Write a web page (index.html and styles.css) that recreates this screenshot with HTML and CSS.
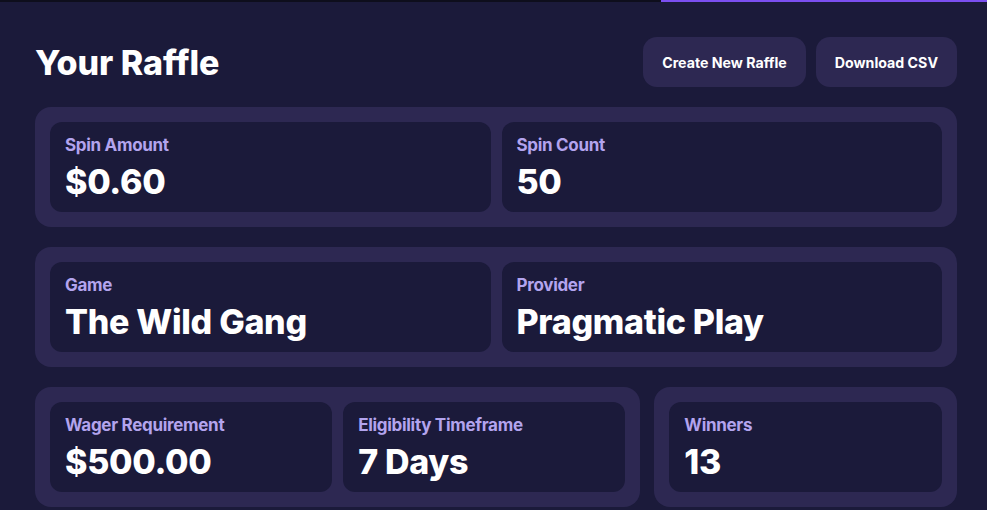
FILE: index.html
```html
<!DOCTYPE html>
<html lang="en">

<head>
    <meta charset="UTF-8">
    <meta name="viewport" content="width=device-width, initial-scale=1.0">
    <title>Your Raffle</title>
    <link rel="stylesheet" href="styles.css">
</head>

<body>
    <div class="topline">
        <div class="topline-dark"></div>
        <div class="topline-bar"></div>
    </div>
    <div class="page">
        <div class="header">
            <h1>Your Raffle</h1>
            <div class="actions">
                <a href="javascript:;" class="btn">Create New Raffle</a>
                <a href="javascript:;" class="btn">Download CSV</a>
            </div>
        </div>

        <div class="group">
            <div class="stat">
                <div class="label">Spin Amount</div>
                <div class="value">$0.60</div>
            </div>
            <div class="stat">
                <div class="label">Spin Count</div>
                <div class="value">50</div>
            </div>
        </div>

        <div class="group">
            <div class="stat">
                <div class="label">Game</div>
                <div class="value">The Wild Gang</div>
            </div>
            <div class="stat">
                <div class="label">Provider</div>
                <div class="value">Pragmatic Play</div>
            </div>
        </div>

        <div class="split">
            <div class="group">
                <div class="stat">
                    <div class="label">Wager Requirement</div>
                    <div class="value">$500.00</div>
                </div>
                <div class="stat">
                    <div class="label">Eligibility Timeframe</div>
                    <div class="value">7 Days</div>
                </div>
            </div>
            <div class="group single">
                <div class="stat">
                    <div class="label">Winners</div>
                    <div class="value">13</div>
                </div>
            </div>
        </div>
    </div>
</body>

</html>
```

FILE: styles.css
```css
body {
    margin: 0;
    background-color: #1b1a3a;
    font-family: "Inter", "Noto Sans", sans-serif;
    color: #fff;
}

.topline {
    display: flex;
    height: 2px;
}

.topline-dark {
    width: 661px;
    background-color: #0e0e1c;
}

.topline-bar {
    flex: 1;
    background-color: #7b4ff0;
}

.page {
    padding: 0 30px 0 35px;
}

.header {
    display: flex;
    align-items: center;
    justify-content: space-between;
    padding-top: 35px;
    margin-bottom: 20px;
}

.header h1 {
    margin: 0;
    font-size: 34px;
    font-weight: 800;
}

.actions {
    display: flex;
    gap: 10px;
}

.btn {
    display: flex;
    align-items: center;
    height: 50px;
    padding: 0 19px;
    border-radius: 14px;
    background-color: #2d2852;
    color: #fff;
    text-decoration: none;
    font-size: 14.2px;
    font-weight: 700;
}

.group {
    display: grid;
    grid-template-columns: 1fr 1fr;
    gap: 11px;
    padding: 15px;
    margin-bottom: 20px;
    border-radius: 16px;
    background-color: #2d2852;
}

.group.single {
    grid-template-columns: 1fr;
}

.split {
    display: grid;
    grid-template-columns: 2fr 1fr;
    gap: 14px;
}

.stat {
    height: 90px;
    box-sizing: border-box;
    padding: 12px 15px;
    border-radius: 12px;
    background-color: #1b1a3a;
}

.label {
    font-size: 17px;
    line-height: 22px;
    font-weight: 700;
    color: #b3a4ee;
    letter-spacing: -0.3px;
}

.value {
    margin-top: 6px;
    font-size: 34px;
    line-height: 40px;
    font-weight: 800;
    letter-spacing: -0.3px;
}
```
